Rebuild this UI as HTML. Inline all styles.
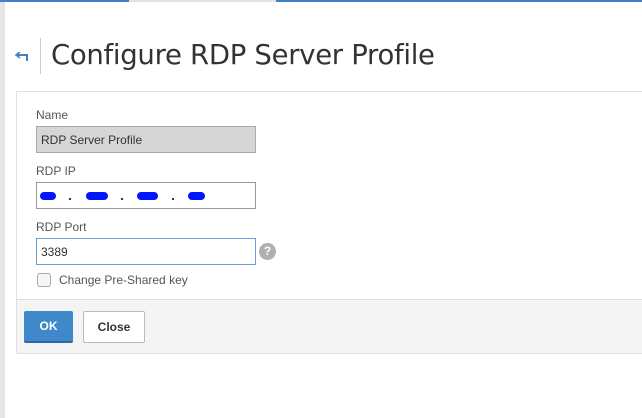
<!DOCTYPE html>
<html><head><style>
*{margin:0;padding:0;box-sizing:border-box}
body{width:642px;height:418px;background:#fff;position:relative;overflow:hidden;font-family:"Liberation Sans",sans-serif;color:#333}
.abs{position:absolute}
.lbl{font-size:12px;color:#555}
.inp{position:absolute;left:36px;width:220px;height:27px;border:1px solid #999;background:#fff;font-size:12px;padding:6px 4px;color:#333}
.blob{position:absolute;height:8px;background:#0016ff;border-radius:4px;top:9px}
.dot{position:absolute;width:2px;height:2px;background:#333;top:15px}
</style></head><body>
<div class="abs" style="left:0;top:0;width:5px;height:418px;background:#e6e6e6"></div>
<div class="abs" style="left:0;top:0;width:129px;height:2px;background:#3f82c4"></div>
<div class="abs" style="left:129px;top:0;width:147px;height:2px;background:#e3e3e3"></div>
<div class="abs" style="left:276px;top:0;width:366px;height:2px;background:#3f82c4"></div>
<svg class="abs" style="left:15px;top:52px" width="14" height="10" viewBox="0 0 14 10"><path d="M1 3H12V9" stroke="#3f82c4" stroke-width="2" fill="none"/><path d="M5 0L1 3L5 6" stroke="#3f82c4" stroke-width="1.6" fill="none"/></svg>
<div class="abs" style="left:40px;top:38px;width:1px;height:36px;background:#ccc"></div>
<div class="abs" style="left:51px;top:39px;font-size:27.5px;color:#333;font-family:'DejaVu Sans','Liberation Sans',sans-serif;letter-spacing:-0.3px">Configure RDP Server Profile</div>
<div class="abs" style="left:16px;top:91px;width:630px;height:263px;border:1px solid #e0e0e0;border-right:none"></div>
<div class="abs" style="left:17px;top:299px;width:625px;height:54px;background:#f4f4f4;border-top:1px solid #ddd"></div>
<div class="abs lbl" style="left:36px;top:108px">Name</div>
<div class="inp" style="top:126px;background:#d6d6d6;border-color:#aaa">RDP Server Profile</div>
<div class="abs lbl" style="left:36px;top:164px">RDP IP</div>
<div class="inp" style="top:182px">
<div class="blob" style="left:3px;width:16px"></div><div class="dot" style="left:32px"></div>
<div class="blob" style="left:49px;width:22px"></div><div class="dot" style="left:84px"></div>
<div class="blob" style="left:100px;width:21px"></div><div class="dot" style="left:135px"></div>
<div class="blob" style="left:151px;width:17px"></div>
</div>
<div class="abs lbl" style="left:36px;top:220px">RDP Port</div>
<div class="inp" style="top:238px;border-color:#6a9ed6">3389</div>
<div class="abs" style="left:259px;top:243px;width:17px;height:17px;border-radius:50%;background:#b0b0b0;color:#fff;font-size:12px;font-weight:bold;text-align:center;line-height:17px">?</div>
<div class="abs" style="left:37px;top:273px;width:14px;height:14px;border:1px solid #aaa;border-radius:3px;background:#f6f6f6"></div>
<div class="abs lbl" style="left:59px;top:273px">Change Pre-Shared key</div>
<div class="abs" style="left:24px;top:311px;width:49px;height:32px;background:#3f88c9;border-bottom:2px solid #2a6aa6;border-radius:2px;color:#fff;font-weight:bold;font-size:12px;text-align:center;line-height:31px">OK</div>
<div class="abs" style="left:83px;top:311px;width:62px;height:32px;background:#fff;border:1px solid #bbb;border-radius:2px;color:#333;font-weight:bold;font-size:12px;text-align:center;line-height:30px">Close</div>
</body></html>
